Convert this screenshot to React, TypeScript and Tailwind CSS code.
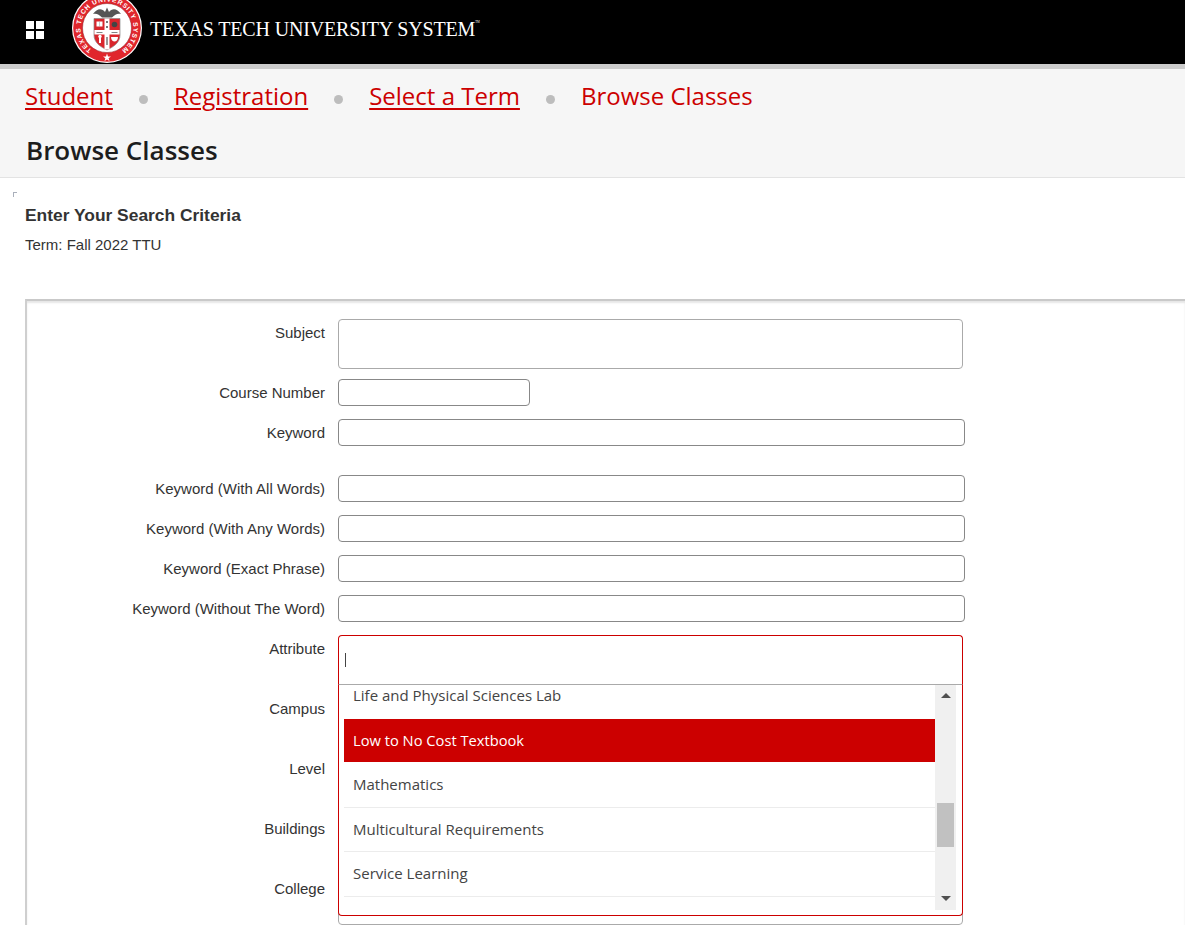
import React from "react";

const sans = "font-['Liberation_Sans',Arial,sans-serif]";
const open = "font-['Open_Sans',sans-serif]";

function Seal() {
  return (
    <svg width="70" height="64" viewBox="0 7 70 64" className="shrink-0">
      <defs>
        <path id="sealRing" d="M19.8 56.7 A26.5 26.5 0 1 1 50.2 56.7" />
      </defs>
      <circle cx="35" cy="35" r="35" fill="#fff" />
      <circle cx="35" cy="35" r="33.8" fill="#e0262c" />
      <circle cx="35" cy="35" r="24.5" fill="#fff" />
      <circle cx="35" cy="35" r="24.5" fill="none" stroke="#8a1a1e" strokeWidth="0.5" />
      <text fill="#fff" fontSize="6.6" fontFamily="Liberation Sans" fontWeight="700">
        <textPath href="#sealRing" textLength="134" lengthAdjust="spacing">TEXAS TECH UNIVERSITY SYSTEM</textPath>
      </text>
      <polygon transform="translate(0 1.5)" points="35,59 36,62 39,62 36.6,63.8 37.5,66.5 35,65 32.5,66.5 33.4,63.8 31,62 34,62" fill="#fff" />
      {/* eagle */}
      <path d="M21 21 C25 15 30 15 33 19 L35 14.5 L37 19 C40 15 45 15 49 21 C45 20 43 22 40 24.5 L30 24.5 C27 22 25 20 21 21 Z" fill="#555" />
      {/* shield */}
      <path d="M22 25.5 H48 V42 C48 50 41 54 35 57 C29 54 22 50 22 42 Z" fill="#d9262c" stroke="#888" strokeWidth="0.7" />
      <rect x="32.5" y="25.5" width="5" height="31" fill="#fff" />
      <rect x="22.4" y="37" width="25.2" height="4.5" fill="#fff" />
      <rect x="24.5" y="28.5" width="6" height="5" fill="#fff" />
      <path d="M27.5 28.5 V33.5" stroke="#999" strokeWidth="0.5" />
      <circle cx="42.5" cy="31.5" r="2.8" fill="#444" />
      <rect x="34" y="28" width="2" height="2" fill="#777" />
      <rect x="34" y="33" width="2" height="2" fill="#777" />
      <rect x="24.5" y="39" width="6" height="0.8" fill="#666" />
      <rect x="39.5" y="39" width="6" height="0.8" fill="#666" />
      <rect x="27" y="43" width="2" height="7" fill="#fff" />
      <circle cx="28" cy="43.5" r="1.7" fill="#fff" />
      <path d="M39 44 H46 C46 47 44 48.5 42.5 48.5 C41 48.5 39 47 39 44 Z" fill="#fff" />
      <rect x="34" y="44" width="2" height="8" fill="#999" />
    </svg>
  );
}

function Crumb({ text, link }: { text: string; link?: boolean }) {
  return <span className={link ? "underline underline-offset-[3px] decoration-[2px]" : ""}>{text}</span>;
}

function Dot() {
  return <span className="w-[9px] h-[9px] rounded-full bg-[#bdbdbd] mt-[6px] mx-[26px] shrink-0" />;
}

function Row({ label, tall, wide, short, className, children }: {
  label: string;
  tall?: boolean;
  wide?: boolean;
  short?: boolean;
  className?: string;
  children?: React.ReactNode;
}) {
  const size = short ? "w-[192px]" : wide ? "w-[627px]" : "w-[625px]";
  return (
    <div className={`flex ${className ?? ""}`}>
      <label className="w-[298px] text-right text-[15px] leading-5 pt-1 text-[#333] shrink-0">{label}</label>
      <div className="ml-[13px] relative">
        {children ?? (
          <div className={`${size} ${tall ? "h-[50px] border-[#aaa]" : "h-[27px] border-[#888]"} border rounded-[4px] bg-white`} />
        )}
      </div>
    </div>
  );
}

function AttributeBox() {
  return (
    <>
      <div className="w-[625px] h-[50px] border border-[#cc0000] border-b-[#aaa] rounded-t-[4px] bg-white flex items-center pl-[6px]">
        <span className="w-px h-[14px] bg-[#444] mt-[-1px]" />
      </div>
      <div className={`absolute top-[50px] left-0 w-[625px] h-[231px] z-10 bg-white border border-t-0 border-[#cc0000] rounded-b-[4px] flex pl-[5px] text-[15px] text-[#444] ${open}`}>
        <div className="w-[591px]">
          <div className="h-[34px] pl-[9px] leading-[20px]">Life and Physical Sciences Lab</div>
          <div className="h-[43px] bg-[#cc0000] text-white font-medium flex items-center pl-[9px] text-[14.7px]">Low to No Cost Textbook</div>
          <div className="h-[46px] border-b border-[#ececec] flex items-center pl-[9px]">Mathematics</div>
          <div className="h-[44px] border-b border-[#ececec] flex items-center pl-[9px]">Multicultural Requirements</div>
          <div className="h-[45px] border-b border-[#ececec] flex items-center pl-[9px] pb-[1px]">Service Learning</div>
        </div>
        <div className="w-[21px] h-[225px] bg-[#f0f0f0] flex flex-col items-center pt-[8px]">
          <span className="w-0 h-0 border-x-[5px] border-x-transparent border-b-[5px] border-b-[#505050]" />
          <span className="w-[17px] h-[44px] bg-[#c1c1c1] mt-[105px]" />
          <span className="w-0 h-0 border-x-[5px] border-x-transparent border-t-[5px] border-t-[#505050] mt-[49px]" />
        </div>
      </div>
    </>
  );
}

export default function App() {
  return (
    <div className={`h-[927px] w-[1185px] overflow-hidden bg-white ${sans}`}>
      {/* Top bar */}
      <header className="h-[64px] bg-black flex items-center overflow-hidden">
        <div className="grid grid-cols-2 gap-[2px] ml-[26px] mt-[-4px] w-[18px] shrink-0">
          <span className="h-[8px] bg-white" />
          <span className="h-[8px] bg-white" />
          <span className="h-[8px] bg-white" />
          <span className="h-[8px] bg-white" />
        </div>
        <div className="ml-[28px]">
          <Seal />
        </div>
        <div className="ml-[8px] mt-[-7px] text-white font-['Liberation_Serif',serif] text-[20px] tracking-[-0.15px] whitespace-nowrap flex items-start">
          TEXAS TECH UNIVERSITY SYSTEM
          <span className="text-[3px] mt-[7px] leading-none">TM</span>
        </div>
      </header>
      <div className="h-[5px] bg-[#cccccc]" />

      {/* Breadcrumbs */}
      <div className={`h-[109px] bg-[#f6f6f6] border-b border-[#e3e3e3] pl-[25px] ${open}`}>
        <nav className="flex items-center h-[55px] text-[24px] text-[#cc0000] pb-[1px]">
          <Crumb text="Student" link />
          <Dot />
          <Crumb text="Registration" link />
          <Dot />
          <Crumb text="Select a Term" link />
          <Dot />
          <Crumb text="Browse Classes" />
        </nav>
        <h1 className="text-[26px] leading-[34px] font-semibold text-[#1d1d1d] mt-[9px] ml-px">Browse Classes</h1>
      </div>

      {/* Search heading */}
      <div className="w-[4px] h-[5px] border-l border-t border-[#aab0bb] ml-[13px] mt-[14px]" />
      <div className="pl-[25px]">
        <h2 className="text-[17.4px] font-bold leading-5 text-[#333] mt-[8px]">Enter Your Search Criteria</h2>
        <p className="text-[15px] leading-5 text-[#333] mt-[10px]">Term: Fall 2022 TTU</p>
      </div>

      {/* Form panel */}
      <div className="ml-[25px] mt-[44px] border-l-2 border-t-[2px] border-l-[#cfcfcf] border-t-[#c9c9c9] pt-[18px] shadow-[inset_0_2px_2px_rgba(0,0,0,0.1)]">
        <Row label="Subject" tall />
        <Row label="Course Number" short className="mt-[10px]" />
        <Row label="Keyword" wide className="mt-[13px]" />
        <Row label="Keyword (With All Words)" wide className="mt-[29px]" />
        <Row label="Keyword (With Any Words)" wide className="mt-[13px]" />
        <Row label="Keyword (Exact Phrase)" wide className="mt-[13px]" />
        <Row label="Keyword (Without The Word)" wide className="mt-[13px]" />
        <Row label="Attribute" className="mt-[13px]">
          <AttributeBox />
        </Row>
        <Row label="Campus" tall className="mt-[10px]" />
        <Row label="Level" tall className="mt-[10px]" />
        <Row label="Buildings" tall className="mt-[10px]" />
        <Row label="College" tall className="mt-[10px]" />
      </div>
    </div>
  );
}
